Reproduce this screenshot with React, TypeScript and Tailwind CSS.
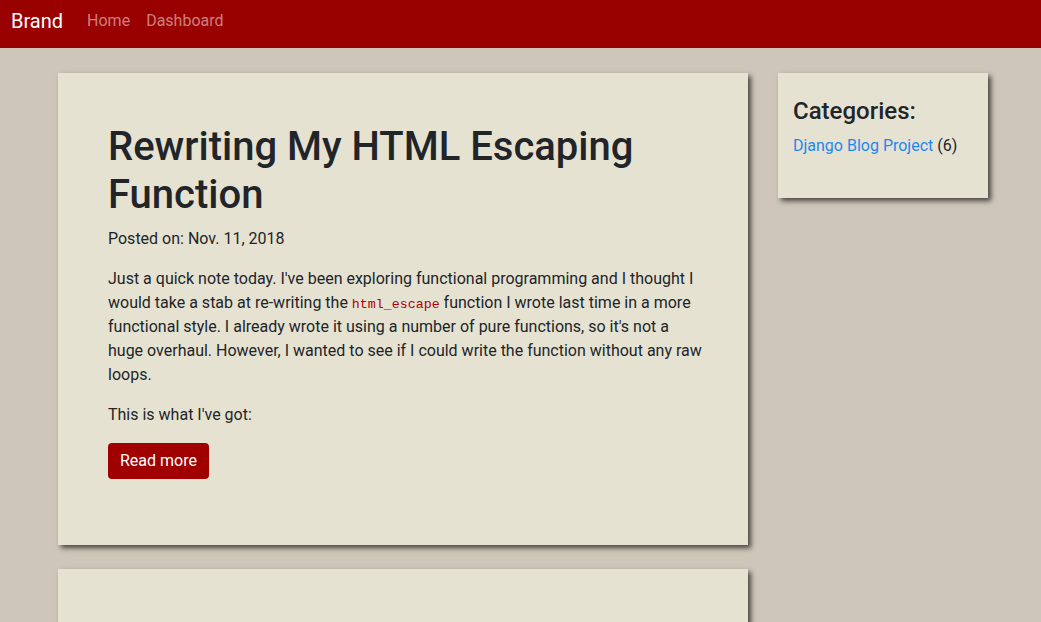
export default function App() {
  return (
    <div className="min-h-[622px] bg-[#cdc6b9] font-['Roboto',_'Liberation_Sans',_sans-serif] text-[#212529]">
      <nav className="flex h-12 items-start bg-[#990000] px-[11px]">
        <a href="#" className="mt-[6px] mr-4 text-[20px] leading-[30px] text-white">
          Brand
        </a>
        <ul className="mt-[9px] flex text-base leading-6">
          <li>
            <a href="#" className="px-2 text-white/50">Home</a>
          </li>
          <li>
            <a href="#" className="px-2 text-white/50">Dashboard</a>
          </li>
        </ul>
      </nav>

      <div className="mt-[25px] flex items-start gap-[30px] pl-[58px]">
        <main className="flex w-[690px] flex-col gap-6">
          <article className="bg-[#e6e2d2] py-[50px] pr-[42px] pl-[50px] shadow-[3px_3px_5px_rgba(0,0,0,0.65)]">
            <h1 className="mb-2 text-[40px] leading-[48px] font-medium">
              Rewriting My HTML Escaping Function
            </h1>
            <p className="mb-4 text-base leading-6">Posted on: Nov. 11, 2018</p>
            <p className="mb-4 text-base leading-6">
              Just a quick note today. I've been exploring functional programming and I thought I would take a stab at
              re-writing the{" "}
              <code className="font-['Liberation_Mono',_monospace] text-[13.3px] leading-none text-[#b00000]">
                html_escape
              </code>{" "}
              function I wrote last time in a more functional style. I already wrote it using a number of pure
              functions, so it's not a huge overhaul. However, I wanted to see if I could write the function without
              any raw loops.
            </p>
            <p className="mb-4 text-base leading-6">This is what I've got:</p>
            <div className="mb-4 flex">
              <a href="#" className="rounded bg-[#a00000] px-3 py-1.5 text-base leading-6 text-white">
                Read more
              </a>
            </div>
          </article>
          <article className="h-[120px] bg-[#e6e2d2] shadow-[3px_3px_5px_rgba(0,0,0,0.65)]"></article>
        </main>

        <aside className="w-[210px] bg-[#e6e2d2] px-[15px] pt-6 pb-6 shadow-[3px_3px_5px_rgba(0,0,0,0.65)]">
          <h4 className="mb-2 text-2xl leading-[28.8px] font-medium">Categories:</h4>
          <p className="mb-4 text-base leading-6">
            <a href="#" className="text-[#1e88f0]">Django Blog Project</a> (6)
          </p>
        </aside>
      </div>
    </div>
  );
}
